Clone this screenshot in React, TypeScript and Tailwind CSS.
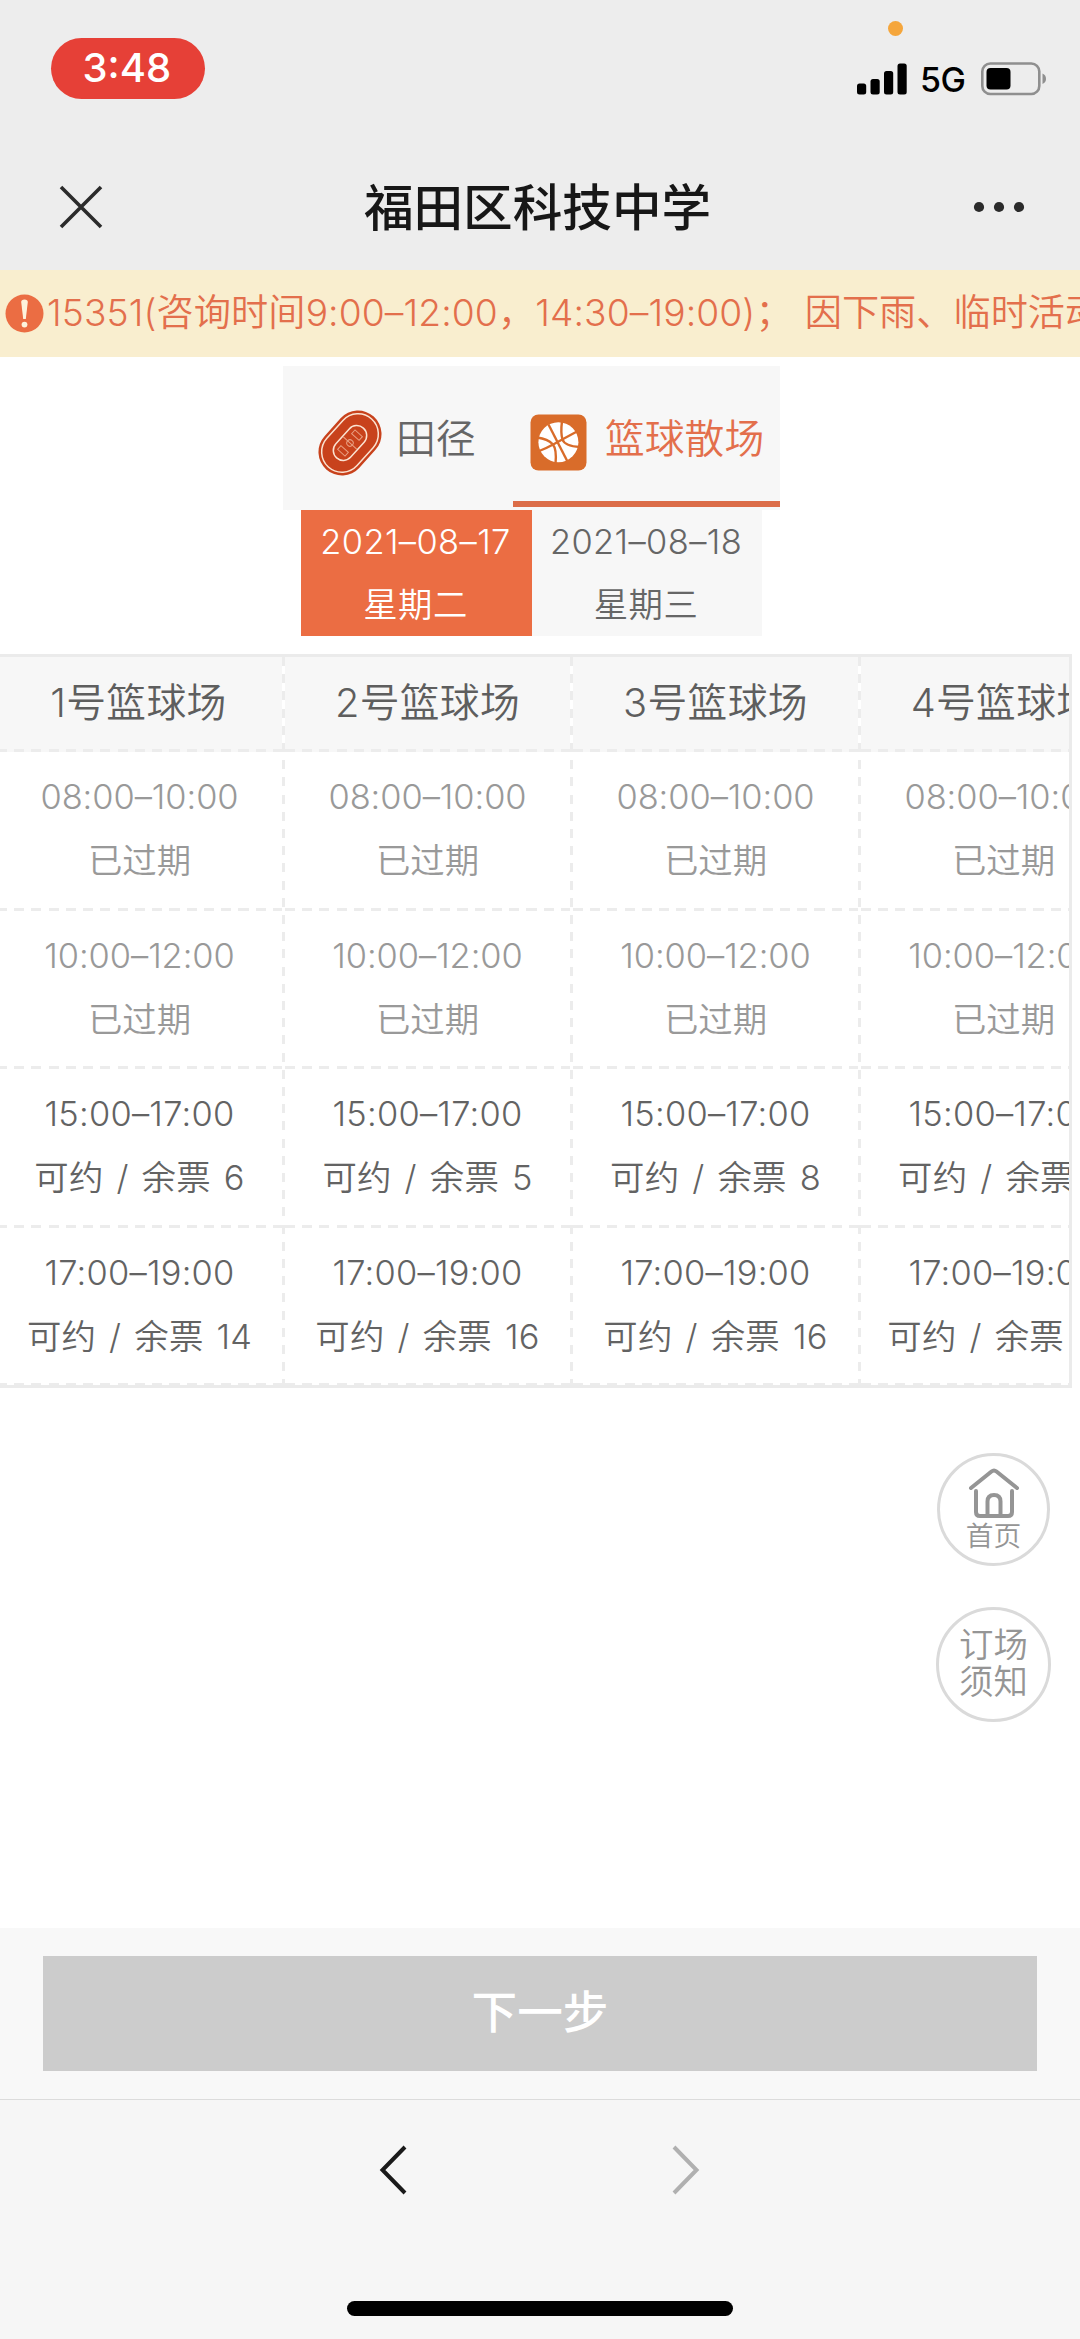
const DASH_X =
  'h-[3px] w-full bg-[repeating-linear-gradient(90deg,#ececec_0_10px,transparent_10px_17.25px)]';
const DASH_Y =
  'w-[3px] shrink-0 bg-[repeating-linear-gradient(180deg,#ececec_0_9px,transparent_9px_17.2px)]';

type Slot = { time: string; label: string; open: boolean };

const expired = (time: string): Slot => ({ time, label: '已过期', open: false });
const open = (time: string, left: number): Slot => ({ time, label: `可约 / 余票 ${left}`, open: true });

const courts = [
  { name: '1号篮球场', left: [6, 14] },
  { name: '2号篮球场', left: [5, 16] },
  { name: '3号篮球场', left: [8, 16] },
  { name: '4号篮球场', left: [8, 20] },
].map((c) => ({
  name: c.name,
  slots: [
    expired('08:00–10:00'),
    expired('10:00–12:00'),
    open('15:00–17:00', c.left[0]),
    open('17:00–19:00', c.left[1]),
  ],
}));

function StatusBar() {
  return (
    <div className="relative flex h-[140px] items-start justify-between pl-[51px] pr-[33px]">
      <div className="mt-[37.5px] flex h-[61.5px] w-[153.5px] items-center justify-center rounded-full bg-[#e64037] pr-[2px] text-[40px] font-[450] text-white">
        3:48
      </div>
      <div className="absolute left-[887.5px] top-[21px] h-[15px] w-[15px] rounded-full bg-[#f5a63c]" />
      <div className="mt-[62px] flex h-[34px] items-center">
        <svg width="50" height="32" viewBox="0 0 50 32">
          <rect x="0" y="20.5" width="9.2" height="11" rx="2.5" />
          <rect x="13.5" y="16" width="9.2" height="15.5" rx="2.5" />
          <rect x="27" y="8" width="9.2" height="23.5" rx="2.5" />
          <rect x="40.5" y="0.5" width="9.2" height="31" rx="2.5" />
        </svg>
        <span className="ml-[13px] w-[60px] pt-[1px] text-[34px] font-[450] leading-[34px] tracking-[-0.5px] text-black">5G</span>
        <svg width="67" height="34" viewBox="0 0 67 34">
          <rect x="2.3" y="1.5" width="57" height="30.5" rx="8" fill="none" stroke="#8f8f8f" strokeWidth="2.6" />
          <rect x="6.5" y="6" width="24" height="21.5" rx="4" />
          <path d="M62.5 11.5 Q66 13 66 16.7 T62.5 22 Z" fill="#8f8f8f" />
        </svg>
      </div>
    </div>
  );
}

function TitleBar() {
  return (
    <div className="flex h-[130px] items-center justify-between pl-[59px] pr-[55px]">
      <svg className="mb-[-3px]" width="44" height="44" viewBox="0 0 44 44" stroke="#2b2b2b" strokeWidth="3.6">
        <path d="M2 2 L42 42 M42 2 L2 42" />
      </svg>
      <h1 className="mr-[1px] pt-[5px] text-[49.6px] font-medium leading-[60px] text-[#171717]">福田区科技中学</h1>
      <svg className="mb-[-4px]" width="52" height="12" viewBox="0 0 52 12" fill="#2b2b2b">
        <circle cx="6" cy="6" r="5.1" />
        <circle cx="26" cy="6" r="5.1" />
        <circle cx="46" cy="6" r="5.1" />
      </svg>
    </div>
  );
}

function Notice() {
  return (
    <div className="flex h-[87px] items-center overflow-hidden whitespace-nowrap bg-[#f9eecf] pl-[5px] text-[37.2px] text-[#e36f4c]">
      <svg className="shrink-0" width="39" height="39" viewBox="0 0 39 39">
        <circle cx="19.5" cy="19.5" r="19" fill="#eb6d43" />
        <path d="M16.2 8 Q16.2 5.4 19.5 5.4 T22.8 8 L20.8 25 H18.2 Z" fill="#fdf3dc" />
        <circle cx="19.5" cy="30.6" r="2.9" fill="#fdf3dc" />
      </svg>
      <span className="ml-[3px] pb-[1px] tracking-[0.1px]">15351(咨询时间9:00–12:00，14:30–19:00)；</span>
      <span className="ml-[12px] pb-[1px]">因下雨、临时活动</span>
    </div>
  );
}

function TrackIcon() {
  return (
    <svg className="shrink-0" width="66" height="66" viewBox="0 0 66 66" fill="none">
      <g transform="rotate(42 33 33)">
        <rect x="9.5" y="-2.5" width="47" height="71" rx="23.5" fill="#c8421c" />
        <rect x="12.7" y="0.7" width="40.6" height="64.6" rx="20.3" stroke="#fbe3d2" strokeWidth="1.5" />
        <rect x="23" y="13" width="20" height="40" rx="10" stroke="#fbe3d2" strokeWidth="1.5" />
        <path d="M24 33 H42 M28 20 V25 H38 V20 Z M28 46 V41 H38 V46 Z" stroke="#e9a184" strokeWidth="1" />
        <circle cx="33" cy="33" r="3.2" stroke="#e9a184" strokeWidth="1" />
      </g>
    </svg>
  );
}

function BasketballIcon() {
  return (
    <svg className="shrink-0" width="57" height="57" viewBox="0 0 57 57" fill="none">
      <rect x="0.5" y="0.5" width="56" height="56" rx="8" fill="#d96c2a" />
      <circle cx="28.4" cy="28.2" r="20" fill="#fff" />
      <g stroke="#d96c2a" strokeWidth="2.4">
        <path d="M18.500 10.500 L38.500 49.500" />
        <path d="M8 37.500 Q17 34 25 29.500 T47 17.500" />
        <path d="M7 23.500 Q18 25 22.500 30 T25.500 50" />
        <path d="M32 7 Q30.500 19 32.500 25.500 T50 33" />
      </g>
    </svg>
  );
}

function SportTabs() {
  return (
    <div className="mx-auto flex h-[144px] w-[497px] bg-[#f7f7f7] text-[39.8px]">
      <div className="flex w-[230px] items-center pl-[34px] pt-[9px] text-[#666]">
        <TrackIcon />
        <span className="ml-[13px] pb-[7px]">田径</span>
      </div>
      <div className="flex h-[141px] w-[267px] items-center border-b-[6px] border-[#dc6d48] pl-[17px] pt-[18px] text-[#e36f4c]">
        <BasketballIcon />
        <span className="ml-[18px] pb-[7px]">篮球散场</span>
      </div>
    </div>
  );
}

function DateTabs() {
  return (
    <div className="mx-auto flex h-[126px] w-[461px] text-center text-[34.4px] leading-[63px] tracking-[0.4px]">
      <div className="w-[231px] bg-[#eb6d43] pr-[2px] text-white">
        <div>2021–08–17</div>
        <div>星期二</div>
      </div>
      <div className="w-[230px] bg-[#f7f7f7] pr-[2px] text-[#666]">
        <div>2021–08–18</div>
        <div>星期三</div>
      </div>
    </div>
  );
}

function CourtTable() {
  return (
    <div className="mt-[18px] h-[734px] w-[1072px] overflow-hidden border-y-[3px] border-r-[3px] border-[#ebebeb]">
      <div className="-ml-[3px] flex w-[1152px]">
        {courts.map((court) => (
          <div key={court.name} className="flex h-[730px] w-72 first:[&_h2]:pr-[2px]">
            <div className="flex grow flex-col">
              <div className="flex h-[95px] flex-col bg-[#f7f7f7]">
                <h2 className="grow text-center text-[39.8px] leading-[92px] tracking-[0.3px] text-[#5e5e5e]">{court.name}</h2>
                <div className={DASH_X} />
              </div>
              {court.slots.map((slot) => (
                <div
                  key={slot.time}
                  className={`flex h-[158.5px] flex-col pt-[13px] text-center text-[34.4px] leading-[64px] ${slot.open ? 'tracking-[0.25px] text-[#636363]' : 'tracking-[-0.05px] text-[#999]'}`}
                >
                  <div>{slot.time}</div>
                  <div className="grow whitespace-nowrap [word-spacing:3px]">{slot.label}</div>
                  <div className={DASH_X} />
                </div>
              ))}
            </div>
            <div className={DASH_Y} />
          </div>
        ))}
      </div>
    </div>
  );
}

function FloatingButtons() {
  return (
    <div className="absolute right-[29px] top-[1453px] flex flex-col items-center text-[#959595]">
      <div className="flex h-[113px] w-[113px] flex-col items-center rounded-full border-[3px] border-[#dadada] bg-white pt-[11px]">
        <svg width="52" height="52" viewBox="0 0 52 52" fill="none" stroke="#959595" strokeWidth="4" strokeLinecap="round" strokeLinejoin="round">
          <path d="M3 21 L23.5 4.5 Q26 2.5 28.5 4.5 L49 21" />
          <path d="M8 24 V45 Q8 49 12 49 H40 Q44 49 44 45 V24" />
          <path d="M19.5 49 V34.5 Q19.5 28 26 28 T32.5 34.5 V49" />
        </svg>
        <span className="text-[27.8px] leading-[35px]">首页</span>
      </div>
      <div className="mt-[41px] flex h-[115px] w-[115px] flex-col items-center rounded-full border-[3px] border-[#dadada] bg-white pt-[16px] text-[34.4px] leading-[37px]">
        <span>订场</span>
        <span>须知</span>
      </div>
    </div>
  );
}

function Footer() {
  return (
    <div className="mt-auto">
      <div className="h-[171px] bg-[#f8f8f8] px-[43px] pt-[28px]">
        <button className="flex h-[115px] w-full items-center justify-center bg-[#ccc] text-[45.6px] font-medium text-white">
          下一步
        </button>
      </div>
      <div className="flex h-[240px] flex-col items-center border-t border-[#dcdcdc] bg-[#f6f6f6]">
        <div className="mt-[45px] flex gap-[263px] pr-[1px]">
          <svg width="29" height="50" viewBox="0 0 29 50" fill="none" stroke="#1a1a1a" strokeWidth="4">
            <path d="M26 2 L3.5 25 L26 48" />
          </svg>
          <svg width="29" height="50" viewBox="0 0 29 50" fill="none" stroke="#b0b0b0" strokeWidth="4">
            <path d="M3 2 L25.5 25 L3 48" />
          </svg>
        </div>
        <div className="mb-[23px] mt-auto h-[15px] w-[386px] rounded-full bg-black" />
      </div>
    </div>
  );
}

export default function App() {
  return (
    <div className="relative flex h-[2339px] w-[1080px] flex-col overflow-hidden bg-white font-[350] [font-family:Inter,'Noto_Sans_CJK_SC',sans-serif]">
      <header className="h-[270px] bg-[#ededed]">
        <StatusBar />
        <TitleBar />
      </header>
      <Notice />
      <div className="mt-[9px] pr-[17px]">
        <SportTabs />
        <DateTabs />
      </div>
      <CourtTable />
      <FloatingButtons />
      <Footer />
    </div>
  );
}
